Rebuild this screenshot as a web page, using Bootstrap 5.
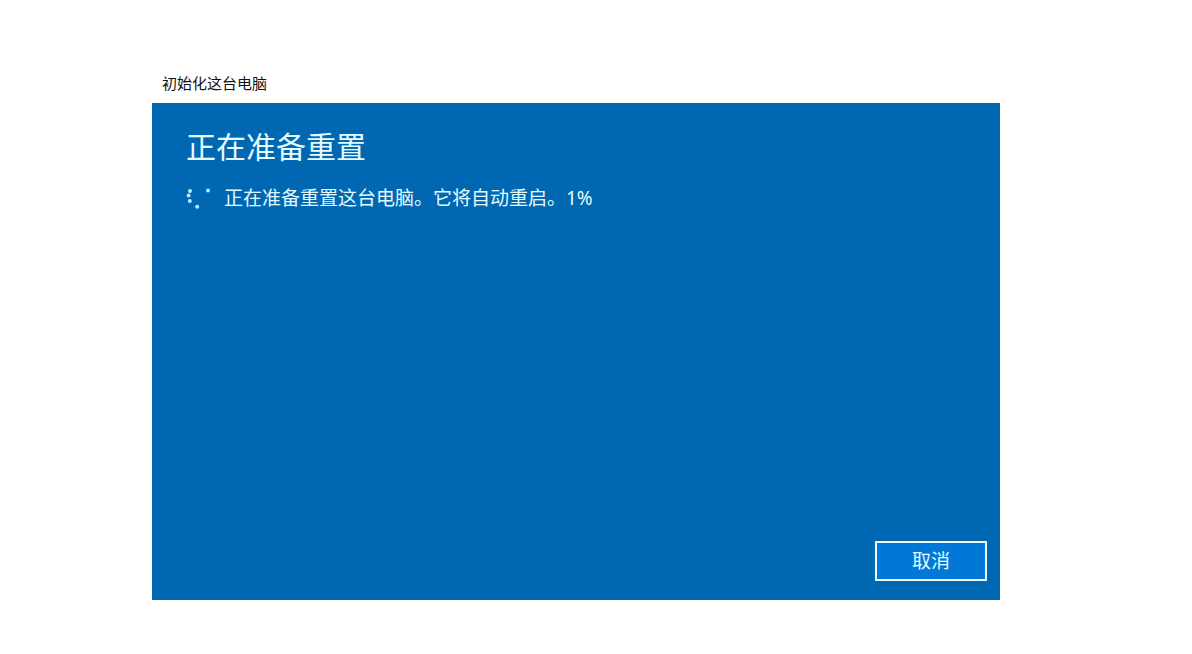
<!DOCTYPE html>
<html lang="zh-CN">
<head>
<meta charset="utf-8">
<meta name="viewport" content="width=device-width, initial-scale=1">
<title>初始化这台电脑</title>
<link href="https://cdn.jsdelivr.net/npm/bootstrap@5.3.0/dist/css/bootstrap.min.css" rel="stylesheet">
<style>
  body { font-family: "Noto Sans", "Noto Sans CJK SC", sans-serif; background: #fff; }
  .reset-page { padding: 65px 192px 54px 152px; }
  .reset-title { font-size: 15px; line-height: 20px; padding: 8px 10px 10px; color: #111; }
  .reset-panel { background: #0067b3; color: #e4fbff; padding: 23px 13px 19px 34px; }
  .reset-heading { font-size: 30px; line-height: 42px; font-weight: 400; }
  .reset-status { font-size: 19px; line-height: 28px; margin-top: 16px; }
  .reset-spinner { width: 24px; height: 24px; margin-right: 14px; }
  .reset-cancel { width: 112px; height: 40px; font-size: 19px; line-height: 28px; background: #0078d7; color: #e4fbff; border: 2px solid #effdff; }
  .reset-cancel:hover { background: #1683dc; color: #fff; border-color: #fff; }
  @media (max-width: 767px) { .reset-page { padding: 24px; } }
</style>
</head>
<body>
<main class="reset-page d-flex flex-column min-vh-100">
  <div class="reset-title">初始化这台电脑</div>
  <section class="reset-panel d-flex flex-column flex-grow-1">
    <h1 class="reset-heading mb-0">正在准备重置</h1>
    <div class="reset-status d-flex align-items-center" role="status">
      <svg class="reset-spinner flex-shrink-0" viewBox="0 0 24 24" fill="#b4ecff" aria-hidden="true">
        <circle cx="4" cy="5" r="2"/>
        <circle cx="2.6" cy="9.5" r="2"/>
        <circle cx="3.8" cy="15" r="2"/>
        <circle cx="11.2" cy="20.7" r="2"/>
        <circle cx="22" cy="4.5" r="2"/>
      </svg>
      <span>正在准备重置这台电脑。它将自动重启。1%</span>
    </div>
    <button type="button" class="reset-cancel btn rounded-0 p-0 mt-auto align-self-end">取消</button>
  </section>
</main>
<script src="https://cdn.jsdelivr.net/npm/bootstrap@5.3.0/dist/js/bootstrap.bundle.min.js"></script>
</body>
</html>
